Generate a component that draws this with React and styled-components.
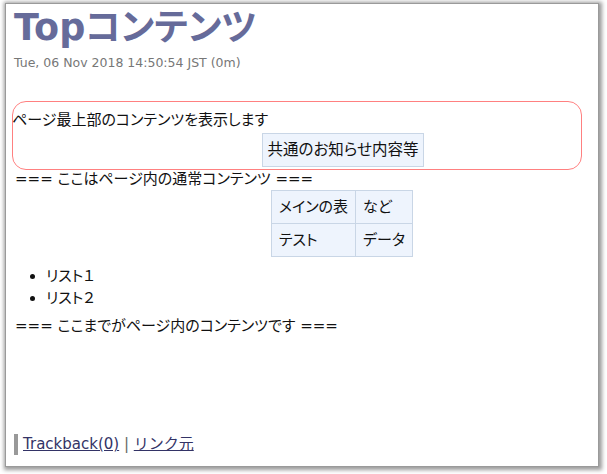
import styled, { createGlobalStyle } from "styled-components";

const GlobalStyle = createGlobalStyle`
  html, body {
    margin: 0;
    padding: 0;
    background: #ffffff;
  }
  body {
    font-family: "DejaVu Sans", "Noto Sans CJK JP", sans-serif;
    color: #111;
  }
`;

const Frame = styled.div`
  width: 607px;
  height: 474px;
  box-sizing: border-box;
  padding: 3px 8px 7px 5px;
`;

const Page = styled.div`
  height: 100%;
  box-sizing: border-box;
  background: #fff;
  border: 1px solid #9a9a9a;
  box-shadow: 1px 1px 4px 2px rgba(0, 0, 0, 0.4);
  padding: 0 6px;
  display: flex;
  flex-direction: column;
  font-size: 15px;
  font-feature-settings: "palt";
`;

const Title = styled.h1`
  margin: 3px 0 0 2px;
  font-size: 36.5px;
  line-height: 42px;
  font-weight: bold;
  color: #666b9a;
`;

const Stamp = styled.div`
  margin: 6px 0 0 2px;
  font-size: 12.5px;
  color: #777;
`;

const Notice = styled.div`
  margin: 31px 10px 0 0;
  border: 1.5px solid #ff8080;
  border-radius: 14px;
  height: 69px;
  box-sizing: border-box;
  padding-top: 8px;
  line-height: 20px;
`;

const NoticeText = styled.div`
  margin-left: -1px;
`;

const Centered = styled.div`
  margin-top: ${(p) => p.$mt || "0"};
  padding-left: ${(p) => p.$shift || "80px"};
  display: flex;
  justify-content: center;
`;

const Cell = styled.td`
  background: #eef4fd;
  border: 1px solid #c9d6e6;
  padding: 6px ${(p) => p.$padX || "7px"};
  line-height: 20px;
  white-space: nowrap;
  font-size: ${(p) => p.$size || "15px"};
`;

const Table = styled.table`
  border-collapse: collapse;
`;

const Line = styled.div`
  margin: ${(p) => p.$mt || "0"} 0 0 3px;
  line-height: 18px;
`;

const List = styled.ul`
  margin: 8px 0 0 0;
  padding-left: 34px;
  line-height: 22px;
`;

const Footer = styled.div`
  margin-top: auto;
  margin-bottom: 11px;
  margin-left: 2px;
  border-left: 4px solid #999;
  padding-left: 5px;
  line-height: 21px;
  color: #666;
  font-feature-settings: normal;
`;

const FootLink = styled.a`
  color: #333366;
  text-decoration: underline;
`;

export default function App() {
  return (
    <Frame>
      <GlobalStyle />
      <Page>
        <Title>Topコンテンツ</Title>
        <Stamp>Tue, 06 Nov 2018 14:50:54 JST (0m)</Stamp>
        <Notice>
          <NoticeText>ページ最上部のコンテンツを表示します</NoticeText>
          <Centered $mt="3px" $shift="92px">
            <Table>
              <tbody>
                <tr>
                  <Cell $size="15.5px" $padX="5px">共通のお知らせ内容等</Cell>
                </tr>
              </tbody>
            </Table>
          </Centered>
        </Notice>
        <Line $mt="0px">=== ここはページ内の通常コンテンツ ===</Line>
        <Centered $mt="2px">
          <Table>
            <tbody>
              <tr>
                <Cell>メインの表</Cell>
                <Cell>など</Cell>
              </tr>
              <tr>
                <Cell>テスト</Cell>
                <Cell>データ</Cell>
              </tr>
            </tbody>
          </Table>
        </Centered>
        <List>
          <li>リスト１</li>
          <li>リスト２</li>
        </List>
        <Line $mt="8px">=== ここまでがページ内のコンテンツです ===</Line>
        <Footer>
          <FootLink href="#">Trackback(0)</FootLink> | <FootLink href="#">リンク元</FootLink>
        </Footer>
      </Page>
    </Frame>
  );
}
